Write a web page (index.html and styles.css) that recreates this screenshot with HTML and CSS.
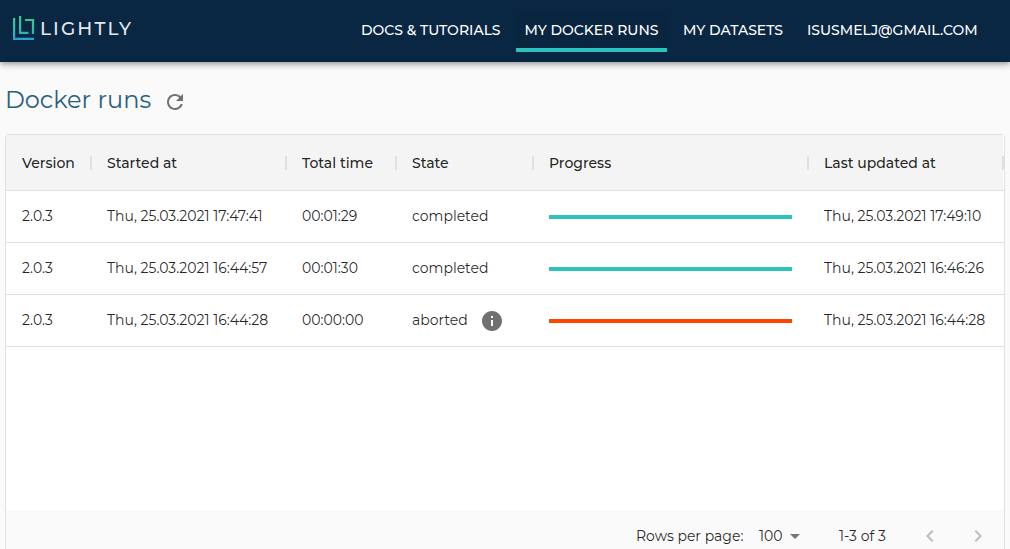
FILE: index.html
```html
<!DOCTYPE html>
<html lang="en">
<head>
<meta charset="utf-8">
<title>Docker runs</title>
<link rel="stylesheet" href="styles.css">
</head>
<body>
<header class="topbar">
  <a class="brand">
    <svg class="brand-mark" width="22" height="25" viewBox="0 0 22 25" fill="none" stroke="url(#mark)" stroke-width="2.2">
      <defs><linearGradient id="mark" gradientUnits="userSpaceOnUse" x1="10" y1="0" x2="10" y2="24"><stop offset="0" stop-color="#35cf88"/><stop offset=".5" stop-color="#2dc0aa"/><stop offset="1" stop-color="#26a2cb"/></linearGradient></defs>
      <path d="M1.100 2v20.900H21M7.100 0v16.900H15.500M12 4h8v14"/>
    </svg>
    <span class="brand-name">LIGHTLY</span>
  </a>
  <nav class="nav">
    <a class="nav-link docs">DOCS &amp; TUTORIALS</a>
    <a class="nav-link runs active">MY DOCKER RUNS</a>
    <a class="nav-link datasets">MY DATASETS</a>
    <a class="nav-link account">ISUSMELJ@GMAIL.COM</a>
  </nav>
</header>
<main class="content">
  <div class="title-row">
    <h1 class="title">Docker runs</h1>
    <svg class="refresh" width="24" height="24" viewBox="0 0 24 24"><path d="M17.65 6.35C16.2 4.9 14.21 4 12 4c-4.42 0-7.99 3.58-7.99 8s3.57 8 7.99 8c3.73 0 6.84-2.55 7.73-6h-2.08c-.82 2.33-3.04 4-5.65 4-3.31 0-6-2.69-6-6s2.69-6 6-6c1.66 0 3.14.69 4.22 1.78L13 11h7V4l-2.35 2.35z"/></svg>
  </div>
  <section class="grid">
    <div class="row head">
      <div class="cell">Version</div>
      <div class="cell">Started at</div>
      <div class="cell">Total time</div>
      <div class="cell">State</div>
      <div class="cell">Progress</div>
      <div class="cell">Last updated at</div>
    </div>
    <div class="row">
      <div class="cell">2.0.3</div>
      <div class="cell">Thu, 25.03.2021 17:47:41</div>
      <div class="cell">00:01:29</div>
      <div class="cell">completed</div>
      <div class="cell"><div class="bar"></div></div>
      <div class="cell">Thu, 25.03.2021 17:49:10</div>
    </div>
    <div class="row">
      <div class="cell">2.0.3</div>
      <div class="cell">Thu, 25.03.2021 16:44:57</div>
      <div class="cell">00:01:30</div>
      <div class="cell">completed</div>
      <div class="cell"><div class="bar"></div></div>
      <div class="cell">Thu, 25.03.2021 16:46:26</div>
    </div>
    <div class="row">
      <div class="cell">2.0.3</div>
      <div class="cell">Thu, 25.03.2021 16:44:28</div>
      <div class="cell">00:00:00</div>
      <div class="cell"><span class="aborted">aborted</span><svg class="info" width="24" height="24" viewBox="0 0 24 24"><path d="M12 2C6.48 2 2 6.48 2 12s4.480 10 10 10 10-4.480 10-10S17.520 2 12 2zm1 15h-2v-6h2v6zm0-8h-2V7h2v2z"/></svg></div>
      <div class="cell"><div class="bar failed"></div></div>
      <div class="cell">Thu, 25.03.2021 16:44:28</div>
    </div>
    <div class="empty"></div>
    <footer class="pager">
      <span class="per-page">Rows per page:</span>
      <span class="size">100</span>
      <svg class="caret" width="24" height="24" viewBox="0 0 24 24"><path d="M7 10l5 5 5-5z"/></svg>
      <span class="range">1-3 of 3</span>
      <svg class="arrow prev" width="24" height="24" viewBox="0 0 24 24"><path d="M15.410 7.410L14 6l-6 6 6 6 1.410-1.410L10.830 12z"/></svg>
      <svg class="arrow" width="24" height="24" viewBox="0 0 24 24"><path d="M10 6L8.590 7.410 13.170 12l-4.580 4.590L10 18l6-6z"/></svg>
    </footer>
  </section>
</main>
</body>
</html>
```
FILE: styles.css
```css
* { box-sizing: border-box; }
body {
  margin: 0;
  height: 549px;
  overflow: hidden;
  background: #fafafa;
  color: rgba(0, 0, 0, .87);
  font-family: Montserrat, Inter, sans-serif;
  font-size: 14px;
}
svg { flex: none; display: block; }

.topbar {
  position: relative;
  height: 62px;
  padding: 0 23px 0 13px;
  display: flex;
  justify-content: space-between;
  align-items: flex-start;
  background: #092643;
  box-shadow: 0 2px 4px -1px rgba(0, 0, 0, .2), 0 4px 5px rgba(0, 0, 0, .14), 0 1px 10px rgba(0, 0, 0, .12);
}
.brand { display: flex; padding-top: 16px; }
.brand-name {
  margin: 2px 0 0 5px;
  color: #e3e8ec;
  font-size: 18.5px;
  font-weight: 500;
  line-height: 22px;
  letter-spacing: 2.1px;
}
.nav { display: flex; gap: 8px; padding-top: 12px; }
.nav-link {
  height: 40px;
  padding-left: 8px;
  color: #fff;
  font-weight: 500;
  line-height: 37px;
  white-space: nowrap;
}
.docs { width: 155px; }
.runs { width: 151px; padding-left: 8.5px; }
.datasets { width: 116px; }
.account { width: 188px; }
.active { background: #0a2540; border-bottom: 4px solid #2cc2bd; }

.content { padding: 0 5px; }
.title-row { height: 72px; display: flex; padding-top: 22px; }
.title {
  width: 157px;
  margin: 0;
  font-size: 24px;
  font-weight: 400;
  line-height: 32px;
  color: #29607f;
}
.refresh { margin-top: 6px; margin-left: 1px; fill: #707070; }

.grid {
  height: 430px;
  border: 1px solid #e0e0e0;
  border-radius: 4px;
  background: #fff;
  display: flex;
  flex-direction: column;
}
.row {
  flex: none;
  height: 52px;
  display: grid;
  grid-template-columns: 85px 195px 110px 137px 275px 195px;
  border-bottom: 1px solid #e0e0e0;
}
.cell {
  position: relative;
  display: flex;
  align-items: center;
  padding: 0 16px 1px;
  white-space: nowrap;
}
.head {
  height: 56px;
  background: linear-gradient(90deg, #f4f4f4 997px, #fff 997px);
  font-weight: 500;
}
.head .cell { padding-bottom: 0; }
.head .cell::after {
  content: "";
  position: absolute;
  right: -1px;
  top: 21px;
  width: 2px;
  height: 14px;
  background: #e0e0e0;
}
.aborted { width: 68px; }
.info { margin-top: 1px; fill: #707070; }
.bar { width: 243px; height: 4px; margin-top: 2px; background: #2cc2bd; }
.failed { background: #ff4500; }

.empty { height: 163px; }
.pager {
  flex: 1;
  background: #fafafa;
  display: flex;
  align-items: flex-start;
  padding: 14px 14px 0 630px;
  line-height: 24px;
  white-space: nowrap;
}
.per-page { width: 123px; }
.size { width: 24px; }
.caret { fill: #757575; }
.range { width: 54px; margin-left: 32px; }
.arrow { fill: #bdbdbd; }
.prev { margin-right: 24px; margin-left: 25px; }
```
